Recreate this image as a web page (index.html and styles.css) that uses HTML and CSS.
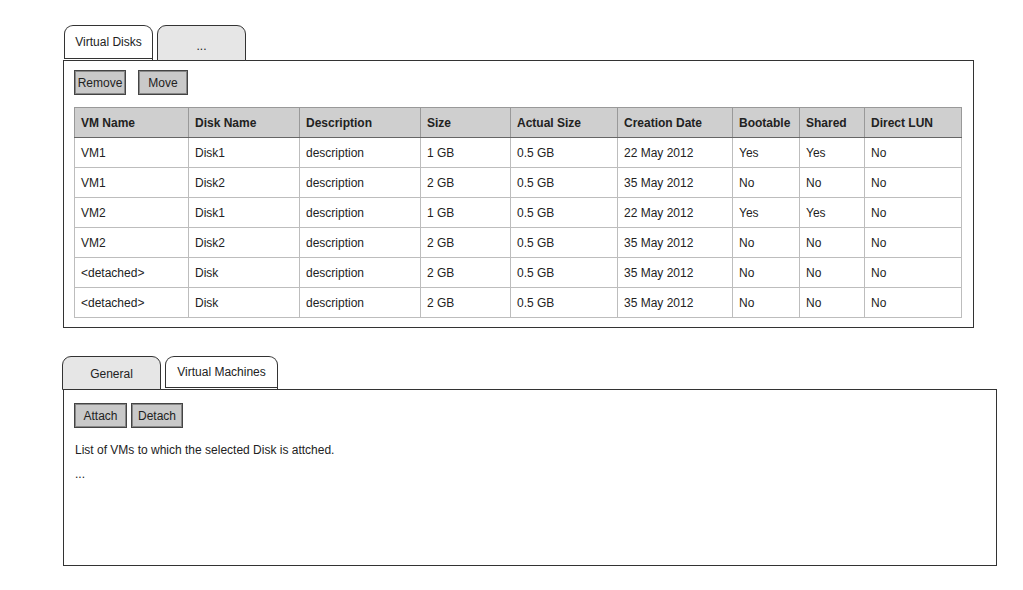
FILE: index.html
```html
<!DOCTYPE html>
<html lang="en">
<head>
    <meta charset="UTF-8">
    <title>Virtual Disks</title>
    <link rel="stylesheet" href="styles.css">
</head>
<body>
    <!-- Painel superior: lista de discos -->
    <div class="section top">
        <div class="tabs">
            <div class="tab active">Virtual Disks</div>
            <div class="tab tab-more">...</div>
        </div>
        <div class="panel panel-disks">
            <div class="toolbar wide">
                <button class="btn btn-remove">Remove</button>
                <button class="btn btn-move">Move</button>
            </div>
            <table class="grid">
                <colgroup>
                    <col style="width:114px">
                    <col style="width:111px">
                    <col style="width:121px">
                    <col style="width:90px">
                    <col style="width:107px">
                    <col style="width:115px">
                    <col style="width:67px">
                    <col style="width:65px">
                    <col style="width:97px">
                </colgroup>
                <thead>
                    <tr>
                        <th>VM Name</th>
                        <th>Disk Name</th>
                        <th>Description</th>
                        <th>Size</th>
                        <th>Actual Size</th>
                        <th>Creation Date</th>
                        <th>Bootable</th>
                        <th>Shared</th>
                        <th>Direct LUN</th>
                    </tr>
                </thead>
                <tbody id="diskRows"></tbody>
            </table>
        </div>
    </div>

    <!-- Painel inferior: detalhes do disco -->
    <div class="section bottom">
        <div class="tabs">
            <div class="tab tab-general">General</div>
            <div class="tab active tab-vms">Virtual Machines</div>
        </div>
        <div class="panel panel-details">
            <div class="toolbar">
                <button class="btn btn-attach">Attach</button>
                <button class="btn btn-detach">Detach</button>
            </div>
            <p class="note">List of VMs to which the selected Disk is attched.</p>
            <p class="note">...</p>
        </div>
    </div>

    <script>
        var discos = [
            ['VM1', 'Disk1', 'description', '1 GB', '0.5 GB', '22 May 2012', 'Yes', 'Yes', 'No'],
            ['VM1', 'Disk2', 'description', '2 GB', '0.5 GB', '35 May 2012', 'No', 'No', 'No'],
            ['VM2', 'Disk1', 'description', '1 GB', '0.5 GB', '22 May 2012', 'Yes', 'Yes', 'No'],
            ['VM2', 'Disk2', 'description', '2 GB', '0.5 GB', '35 May 2012', 'No', 'No', 'No'],
            ['<detached>', 'Disk', 'description', '2 GB', '0.5 GB', '35 May 2012', 'No', 'No', 'No'],
            ['<detached>', 'Disk', 'description', '2 GB', '0.5 GB', '35 May 2012', 'No', 'No', 'No']
        ];

        var tbody = document.getElementById('diskRows');
        discos.forEach(function(linha) {
            var tr = document.createElement('tr');
            linha.forEach(function(valor) {
                var td = document.createElement('td');
                td.textContent = valor;
                tr.appendChild(td);
            });
            tbody.appendChild(tr);
        });
    </script>
</body>
</html>
```

FILE: styles.css
```css
body {
    font-family: "Liberation Sans", Arial, sans-serif;
    font-size: 12px;
    color: #222;
    margin: 0;
    padding: 0;
    background-color: #fff;
}

.section {
    padding-left: 63px;
}
.section.top {
    padding-top: 25px;
}
.section.bottom {
    padding-top: 28px;
}

.tabs {
    display: flex;
    gap: 4px;
    padding-left: 1px;
    position: relative;
    z-index: 1;
    margin-bottom: -1px;
}
.tab {
    height: 36px;
    box-sizing: border-box;
    border: 1px solid #333;
    border-radius: 9px 9px 0 0;
    background-color: #e6e6e6;
    display: flex;
    align-items: center;
    justify-content: center;
    padding-top: 2px;
}
.tab.active {
    background-color: #fff;
    border-bottom: 3px double #333;
    padding-top: 0;
}
.section.top .tab {
    width: 89px;
}
.tab.tab-more {
    padding-top: 5px;
}
.section.bottom .tab {
    height: 34px;
}
.tab.tab-general {
    width: 99px;
    margin-left: -2px;
    padding-top: 1px;
}
.tab.tab-vms {
    width: 113px;
}

.panel {
    border: 1px solid #333;
    box-sizing: border-box;
    padding: 9px 10px;
}
.panel-disks {
    width: 911px;
    height: 268px;
}
.panel-details {
    width: 934px;
    height: 177px;
    padding-top: 13px;
}

.toolbar {
    display: flex;
    gap: 4px;
}
.toolbar.wide {
    gap: 12px;
    margin-bottom: 12px;
}

.btn {
    font-family: inherit;
    font-size: 12px;
    color: #222;
    height: 25px;
    padding: 0;
    background-color: #c9c9c9;
    border: 1px solid #444;
    box-shadow: inset 0 0 0 1px #888;
    cursor: pointer;
}
.btn-remove { width: 52px; }
.btn-move { width: 50px; }
.btn-attach { width: 53px; }
.btn-detach { width: 52px; }

.grid {
    border-collapse: collapse;
    table-layout: fixed;
    width: 887px;
}
.grid th, .grid td {
    text-align: left;
    padding: 0 0 0 6px;
    border: 1px solid #aaa;
    white-space: nowrap;
}
.grid th {
    height: 29px;
    background-color: #cfcfcf;
    border-color: #999;
    border-bottom: 1px solid #666;
    font-weight: bold;
}
.grid td {
    height: 29px;
    border-color: #bdbdbd;
}

.note {
    margin: 15px 0 0 1px;
}
.note + .note {
    margin-top: 10px;
}
```
